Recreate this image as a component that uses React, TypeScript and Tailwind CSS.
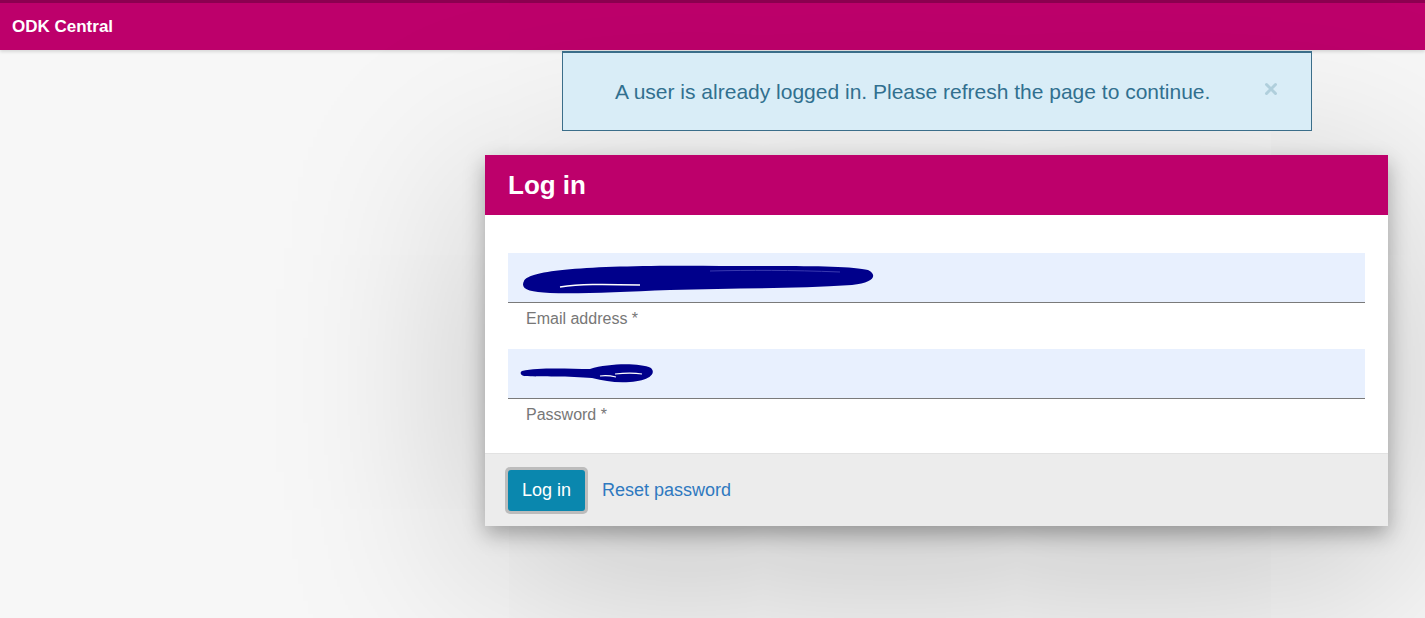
import { X } from 'lucide-react'

const font = { fontFamily: '"Liberation Sans", Arial, sans-serif' }

function Scribble({ wide }: { wide?: boolean }) {
  if (wide) {
    return (
      <svg width="360" height="34" viewBox="0 0 360 34" className="block">
        <path
          d="M4 20 C 10 8, 80 4, 200 5 C 260 5, 330 4, 348 9 C 358 14, 354 22, 332 24 C 270 28, 210 27, 150 29 C 100 31, 60 33, 30 32 C 8 31, 0 28, 4 20 Z"
          fill="#00008b"
        />
        <path d="M40 26 C 60 23, 80 23, 120 24" stroke="#ffffff" strokeWidth="1.5" fill="none" />
        <path d="M190 10 C 230 9, 270 9, 320 11" stroke="#3a3ab0" strokeWidth="1" fill="none" />
      </svg>
    )
  }
  return (
    <svg width="140" height="26" viewBox="0 0 140 26" className="block">
      <path
        d="M2 10 C 20 6, 50 8, 70 8 C 90 2, 120 2, 131 7 C 137 13, 128 20, 110 21 C 95 22, 85 20, 72 17 C 50 15, 20 16, 4 15 C 0 14, 0 11, 2 10 Z"
        fill="#00008b"
      />
      <path d="M95 13 C 105 12, 115 12, 122 13" stroke="#ffffff" strokeWidth="1.2" fill="none" />
      <path d="M80 15 C 86 14, 92 15, 96 16" stroke="#ffffff" strokeWidth="1.2" fill="none" />
    </svg>
  )
}

function Field({ label, wide }: { label: string; wide?: boolean }) {
  return (
    <div>
      <div className="flex h-[50px] items-center border-b border-[#7a7a7a] bg-[#e8f0fe] pl-3">
        <Scribble wide={wide} />
      </div>
      <div className="pl-[18px] pt-[6px] text-[16px] leading-[20px] text-[#777]">{label}</div>
    </div>
  )
}

export default function App() {
  return (
    <div className="relative min-h-[618px] overflow-hidden bg-[#f7f7f7]" style={font}>
      {/* Navbar */}
      <div className="flex h-[50px] items-center border-t-[3px] border-[#8c0050] bg-[#bd006b] pl-3 shadow-[0_2px_3px_rgba(0,0,0,0.12)]">
        <span className="text-[17px] font-bold text-white">ODK Central</span>
      </div>

      {/* Alert */}
      <div className="absolute left-[562px] top-[51px] flex h-[80px] w-[750px] items-center border border-t-2 border-[#3b6e8a] bg-[#d9edf7] pl-[52px] pr-4">
        <span className="text-[21px] text-[#31708f]">
          A user is already logged in. Please refresh the page to continue.
        </span>
        <X className="ml-auto mr-[15px] -mt-[6px] text-[#b0cfdc]" size={18} strokeWidth={4} />
      </div>

      {/* Modal */}
      <div className="ml-[485px] mt-[105px] w-[903px] bg-white shadow-[0_8px_20px_rgba(0,0,0,0.3),0_40px_200px_rgba(0,0,0,0.25)]">
        <div className="flex h-[60px] items-center bg-[#bd006b] px-[23px]">
          <h1 className="text-[26px] font-bold text-white">Log in</h1>
        </div>
        <div className="flex flex-col gap-[20px] px-[23px] pb-[28px] pt-[38px]">
          <Field label="Email address *" wide />
          <Field label="Password *" />
        </div>
        <div className="flex h-[73px] items-center gap-[14px] border-t border-[#e2e2e2] bg-[#ececec] px-[20px]">
          <div className="rounded-[5px] bg-[#bcbcbc] p-[3px]">
            <button className="h-[41px] rounded-[3px] bg-[#0a87ae] px-[14px] text-[18px] text-white">
              Log in
            </button>
          </div>
          <a className="text-[18px] text-[#2f79c0]">Reset password</a>
        </div>
      </div>
    </div>
  )
}
